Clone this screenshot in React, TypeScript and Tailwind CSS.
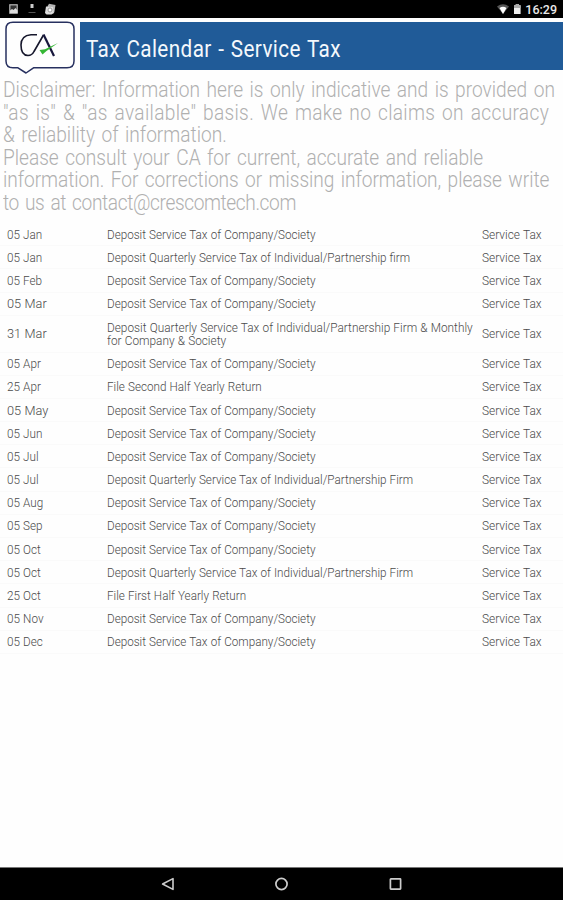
type Entry = {
  date: string;
  task: string;
  tall?: boolean;
};

const COMPANY = "Deposit Service Tax of Company/Society";

const entries: Entry[] = [
  { date: "05 Jan", task: COMPANY },
  { date: "05 Jan", task: "Deposit Quarterly Service Tax of Individual/Partnership firm" },
  { date: "05 Feb", task: COMPANY },
  { date: "05 Mar", task: COMPANY },
  {
    date: "31 Mar",
    task: "Deposit Quarterly Service Tax of Individual/Partnership Firm & Monthly\nfor Company & Society",
    tall: true,
  },
  { date: "05 Apr", task: COMPANY },
  { date: "25 Apr", task: "File Second Half Yearly Return" },
  { date: "05 May", task: COMPANY },
  { date: "05 Jun", task: COMPANY },
  { date: "05 Jul", task: COMPANY },
  { date: "05 Jul", task: "Deposit Quarterly Service Tax of Individual/Partnership Firm" },
  { date: "05 Aug", task: COMPANY },
  { date: "05 Sep", task: COMPANY },
  { date: "05 Oct", task: COMPANY },
  { date: "05 Oct", task: "Deposit Quarterly Service Tax of Individual/Partnership Firm" },
  { date: "25 Oct", task: "File First Half Yearly Return" },
  { date: "05 Nov", task: COMPANY },
  { date: "05 Dec", task: COMPANY },
];

const disclaimer = [
  { text: "Disclaimer: Information here is only indicative and is provided on", cls: "tracking-normal" },
  { text: "\"as is\" & \"as available\" basis. We make no claims on accuracy", cls: "tracking-[0.36px]" },
  { text: "& reliability of information.", cls: "tracking-normal" },
  { text: "Please consult your CA for current, accurate and reliable", cls: "tracking-[-0.02px]" },
  { text: "information. For corrections or missing information, please write", cls: "tracking-[-0.05px]" },
  { text: "to us at contact@crescomtech.com", cls: "tracking-[-0.44px]" },
];

function StatusBar() {
  return (
    <div className="flex h-[18px] shrink-0 items-center bg-black px-[9px]">
      <svg className="h-[18px] w-[52px]" viewBox="0 0 52 18" aria-hidden>
        {/* image */}
        <rect x="0.8" y="4.8" width="7.4" height="8.4" fill="#333" stroke="#bbb" strokeWidth="1.2" />
        <path d="M1 13v-2.5l2-1.5 1.5 1 2-2 2 2.5V13z" fill="#ddd" />
        {/* upload */}
        <path d="M21.5 4h3v4h-3z" fill="#ccc" />
        <path d="M19.5 12.5h7" stroke="#555" />
        {/* camera */}
        <path d="M40 3.8l6.5 1.2-1.2 7.5-7-6z" fill="#b5b5b5" />
        <path d="M37 6.5l7 .5 1 6-2.5 1.5h-5L36 13z" fill="#ddd" />
        <circle cx="41" cy="10" r="2" fill="#fff" stroke="#888" strokeWidth="0.8" />
      </svg>
      <svg className="ml-auto h-[18px] w-[28px]" viewBox="0 0 28 18" aria-hidden>
        <path d="M0 6.5Q6 1.8 12 6.5L6 14z" fill="#555" />
        <path d="M2.5 8Q6 5.5 9.5 8L6 14z" fill="#fff" />
        <path d="M17 5.2h1.8V4h3v1.2h1.8V14H17z" fill="#eee" />
        <path d="M17 5.2h1.8V4h3v1.2h1.8V8H17z" fill="#aaa" />
      </svg>
      <span className="-mr-[3px] pt-[1px] text-[12.5px] leading-[18px] font-medium text-[#e8e8e8]">16:29</span>
    </div>
  );
}

function Logo() {
  return (
    <svg className="h-[57px] w-[80px] shrink-0" viewBox="0 18 80 57" fill="none" aria-hidden>
      <path
        d="M13 22.3H67Q74 22.3 74 29V61Q74 67.8 67 67.8H33.5L26 73L18 67.8H13Q6 67.8 6 61V29Q6 22.3 13 22.3Z"
        stroke="#27305f"
        strokeWidth="1.5"
        strokeLinejoin="round"
      />
      <path
        d="M37 34.7H31Q21 35.5 21 45Q21 55.5 28 55.5Q32 55.5 34 51.5L43.5 35"
        stroke="#16172c"
        strokeWidth="1.6"
      />
      <path d="M43.5 34.5L54 56" stroke="#17173c" strokeWidth="2.2" />
      <path d="M39.5 50L45 49.3L58 43L46.5 51L42.5 54.5Z" fill="#35b735" />
    </svg>
  );
}

function NavBar() {
  return (
    <div className="flex h-[33px] shrink-0 items-center justify-center gap-[99px] border-t border-[#777] bg-black">
      <svg className="h-[15px] w-[15px]" viewBox="0 0 15 15" fill="none" stroke="#ccc" strokeWidth="1.6" strokeLinejoin="round" aria-hidden>
        <path d="M13 1.6v10.8L2.6 7z" />
      </svg>
      <svg className="h-[15px] w-[15px]" viewBox="0 0 15 15" fill="none" stroke="#ccc" strokeWidth="1.7" aria-hidden>
        <circle cx="7.5" cy="7" r="5.6" />
      </svg>
      <svg className="h-[15px] w-[15px]" viewBox="0 0 15 15" fill="none" stroke="#ccc" strokeWidth="1.7" aria-hidden>
        <rect x="2.4" y="1.9" width="10.2" height="10.2" rx="0.5" />
      </svg>
    </div>
  );
}

export default function App() {
  return (
    <div className="flex h-[900px] w-[563px] flex-col overflow-hidden bg-[#fefefe] font-['Roboto','Liberation_Sans',sans-serif]">
      <StatusBar />
      <header className="flex h-[57px] shrink-0">
        <Logo />
        <div className="mt-[4px] flex h-[48px] flex-1 items-center bg-[#205b98] pl-[6px]">
          <h1 className="origin-left scale-x-90 pt-[6px] text-[23px] leading-none font-normal tracking-[0.45px] [word-spacing:1px] whitespace-nowrap text-[#f4f8fc]">
            Tax Calendar - Service Tax
          </h1>
        </div>
      </header>

      <div className="mt-[4px] shrink-0 pl-[3px] text-[21.5px] leading-[22.5px] font-light [word-spacing:2px] text-[#b0b0b0]">
        {disclaimer.map((line) => (
          <p key={line.text} className={`w-fit origin-left scale-x-[0.89] whitespace-pre ${line.cls}`}>
            {line.text}
          </p>
        ))}
      </div>

      <main className="mt-[9px] flex-1 text-[13px] leading-[13px] font-light [word-spacing:0.3px] text-[#4a4a4a]">
        {entries.map((entry, i) => (
          <div
            key={i}
            className={`flex items-center border-b border-[#fafafa] pl-[7px] ${entry.tall ? "h-[36.8px]" : "h-[23.2px]"}`}
          >
            <div className="w-[100px] shrink-0">
              <span
                className={`inline-block origin-left ${/Ma[ry]/.test(entry.date) ? "scale-x-[0.98]" : "scale-x-90"}`}
              >
                {entry.date}
              </span>
            </div>
            <div className="w-[375px] shrink-0">
              <span
                className={`inline-block origin-left align-top whitespace-pre ${entry.tall ? "scale-x-[0.91]" : "scale-x-[0.898]"}`}
              >
                {entry.task}
              </span>
            </div>
            <span className="origin-left scale-x-[0.915] whitespace-nowrap">Service Tax</span>
          </div>
        ))}
      </main>
      <NavBar />
    </div>
  );
}
